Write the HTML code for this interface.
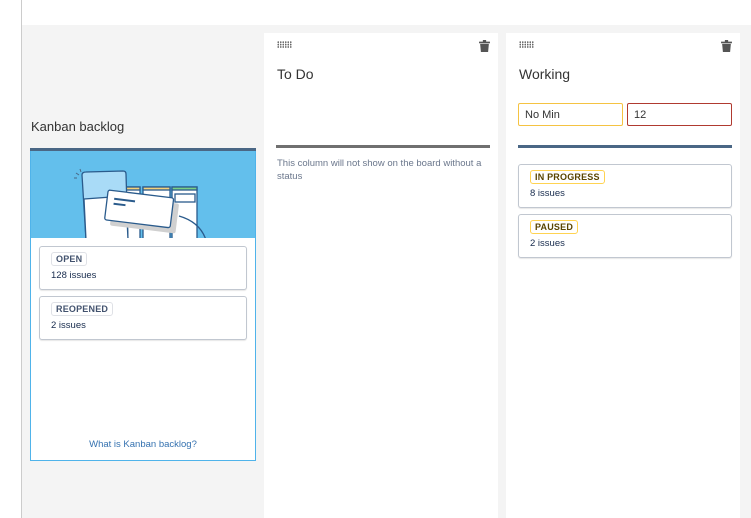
<!DOCTYPE html>
<html><head><style>
*{margin:0;padding:0;box-sizing:border-box}
body{width:751px;height:518px;overflow:hidden;background:#fff;font-family:"Liberation Sans",Arial,sans-serif;position:relative;color:#333}
.side{position:absolute;left:21px;top:0;width:1px;height:518px;background:#ccc}
.gray{position:absolute;left:22px;top:25px;right:0;bottom:0;background:#f4f4f4}
.col{position:absolute;top:33px;width:234px;bottom:0;background:#fff}
.grip{position:absolute;left:13px;top:8px;width:15px;height:7px;background-image:radial-gradient(circle,#666 0.9px,transparent 1px);background-size:2.5px 2.4px}
.trash{position:absolute;right:8px;top:7px}
.title{position:absolute;left:13px;top:34px;font-size:14px;color:#333}
.card{position:absolute;background:#fff;border:1px solid #c1c7d0;border-radius:3px;box-shadow:0 1px 1px rgba(0,0,0,.1)}
.lz{position:absolute;left:11px;top:5px;font-size:9px;font-weight:bold;padding:1px 4px;border:1px solid #dfe1e6;border-radius:3px;color:#42526e;letter-spacing:.2px}
.lz.y{border-color:#ffd351;color:#594300}
.cnt{position:absolute;left:11px;top:23px;font-size:9.5px;color:#172b4d}
</style></head><body>
<div class="side"></div>
<div class="gray"></div>
<div style="position:absolute;left:31px;top:119px;font-size:13px;color:#333">Kanban backlog</div>
<div style="position:absolute;left:30px;top:148px;width:226px;height:313px;border:1px solid #4fb3ea;border-top:none;background:#fff">
 <div style="height:3px;background:#4a6785;margin:0 -1px"></div>
 <svg width="224" height="87" style="display:block" viewBox="31 151 224 87">
  <rect x="31" y="151" width="224" height="87" fill="#63bfec"/>
  <g stroke="#2a5b8c" stroke-width="1.3">
   <rect x="126" y="187" width="14" height="55" fill="#fff"/><rect x="126" y="187" width="14" height="3" fill="#f5d17a"/>
   <rect x="143" y="187" width="27" height="55" fill="#fff"/><rect x="143" y="187" width="27" height="3" fill="#f5d17a"/>
   <rect x="172" y="187" width="25" height="55" fill="#fff"/><rect x="172" y="187" width="25" height="3" fill="#7bcf84"/>
   <rect x="175" y="194" width="20" height="8" fill="#fff"/>
   <path d="M82 175 Q82 172 86 172 L123 171 Q126 171 126 174 L128 240 L86 240 Z" fill="#a9dbf7"/>
   <path d="M84 199 L126 196 L128 240 L86 240 Z" fill="#fff"/>
   <path d="M179 216 Q200 222 206 240" fill="none"/>
  </g>
  <g transform="rotate(7 140 210)">
   <rect x="109" y="194" width="66" height="30" rx="2" fill="#d0d0d0" transform="translate(3,5)"/>
   <rect x="106" y="194" width="66" height="30" rx="2" fill="#fff" stroke="#2a5b8c" stroke-width="1.3"/>
   <path d="M113 202 L134 202 M113 207 L125 207" stroke="#2a5b8c" stroke-width="2"/>
  </g>
  <path d="M76 173 L79 175 M80 169 L81 172 M74 178 L77 178" stroke="#4a6785" stroke-width="1"/>
 </svg>
 <div class="card" style="left:8px;top:98px;width:208px;height:44px"><span class="lz">OPEN</span><span class="cnt">128 issues</span></div>
 <div class="card" style="left:8px;top:148px;width:208px;height:44px"><span class="lz">REOPENED</span><span class="cnt">2 issues</span></div>
 <div style="position:absolute;left:0;right:0;top:291px;text-align:center;font-size:9.5px;color:#3572b0">What is Kanban backlog?</div>
</div>

<div class="col" style="left:264px">
 <div class="grip"></div>
 <svg class="trash" width="11" height="12" viewBox="0 0 10 11"><rect x="0" y="1.5" width="10" height="1.5" fill="#555"/><rect x="3.5" y="0" width="3" height="2" fill="#555"/><path d="M1 3.5 H9 L8.3 11 H1.7 Z" fill="#555"/></svg>
 <div class="title" style="top:33px">To Do</div>
 <div style="position:absolute;left:12px;top:112px;width:214px;height:3px;background:#707070"></div>
 <div style="position:absolute;left:13px;top:124px;width:212px;font-size:9.5px;line-height:13px;color:#6b778c">This column will not show on the board without a status</div>
</div>

<div class="col" style="left:506px">
 <div class="grip"></div>
 <svg class="trash" width="11" height="12" viewBox="0 0 10 11"><rect x="0" y="1.5" width="10" height="1.5" fill="#555"/><rect x="3.5" y="0" width="3" height="2" fill="#555"/><path d="M1 3.5 H9 L8.3 11 H1.7 Z" fill="#555"/></svg>
 <div class="title" style="top:33px">Working</div>
 <div style="position:absolute;left:12px;top:70px;width:105px;height:23px;border:1px solid #f5c342;border-radius:2px;font-size:11px;padding:5px 6px;color:#333">No Min</div>
 <div style="position:absolute;left:121px;top:70px;width:105px;height:23px;border:1px solid #b03a30;border-radius:2px;font-size:11px;padding:5px 6px;color:#333">12</div>
 <div style="position:absolute;left:12px;top:112px;width:214px;height:3px;background:#4a6785"></div>
 <div class="card" style="left:12px;top:131px;width:214px;height:44px"><span class="lz y">IN PROGRESS</span><span class="cnt">8 issues</span></div>
 <div class="card" style="left:12px;top:181px;width:214px;height:44px"><span class="lz y">PAUSED</span><span class="cnt">2 issues</span></div>
</div>
</body></html>
